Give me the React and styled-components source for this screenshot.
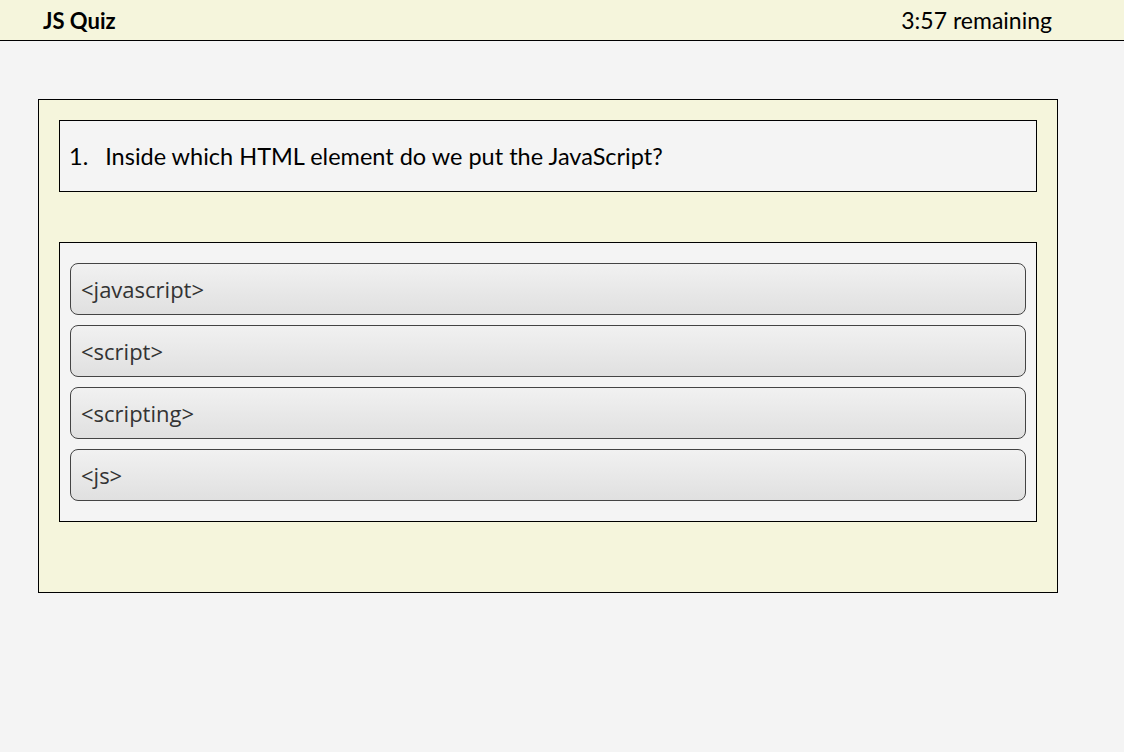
import styled, { createGlobalStyle } from "styled-components"

const GlobalStyle = createGlobalStyle`
  body {
    margin: 0;
    background: #f4f4f4;
    font-family: Lato, "Noto Sans", sans-serif;
    color: #000;
  }
`

const Header = styled.header`
  height: 40px;
  display: flex;
  align-items: center;
  justify-content: space-between;
  padding: 0 72px 0 43px;
  background: #f5f5dc;
  border-bottom: 1px solid #000;
`
const AppName = styled.span`
  font-size: 22px;
  font-weight: bold;
`
const Timer = styled.span`
  font-size: 23px;
`

const Main = styled.main`
  padding: 58px 0 0 38px;
`
const Card = styled.div`
  width: 978px;
  padding: 20px 20px 70px;
  background: #f5f5dc;
  border: 1px solid #000;
`
const Question = styled.div`
  height: 70px;
  display: flex;
  align-items: center;
  gap: 17px;
  padding: 0 9px;
  background: #f4f4f4;
  border: 1px solid #000;
  font-size: 23.5px;
`
const Options = styled.div`
  margin-top: 50px;
  padding: 20px 10px;
  display: flex;
  flex-direction: column;
  gap: 10px;
  background: #f4f4f4;
  border: 1px solid #000;
`
const Option = styled.button`
  height: 52px;
  display: flex;
  align-items: center;
  padding: 0 10px;
  border: 1px solid #444;
  border-radius: 8px;
  background: linear-gradient(to bottom, #f1f1f1, #e0e0e0);
  font-family: "Open Sans", "Noto Sans", sans-serif;
  font-size: 22px;
  color: #333;
  text-align: left;
  cursor: pointer;
`

const answers = ["<javascript>", "<script>", "<scripting>", "<js>"]

function App() {
  return (
    <>
      <GlobalStyle />
      <Header>
        <AppName>JS Quiz</AppName>
        <Timer>3:57 remaining</Timer>
      </Header>
      <Main>
        <Card>
          <Question>
            <span>1.</span>
            <span>Inside which HTML element do we put the JavaScript?</span>
          </Question>
          <Options>
            {answers.map(a => (
              <Option key={a}>{a}</Option>
            ))}
          </Options>
        </Card>
      </Main>
    </>
  )
}

export default App
